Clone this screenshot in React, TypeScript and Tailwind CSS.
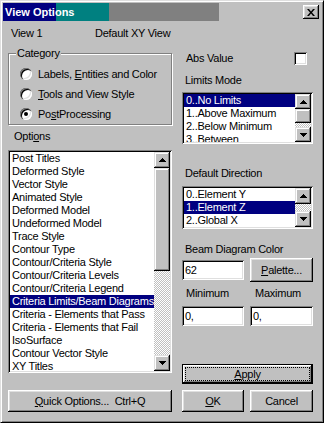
import React from 'react';

const raised =
  'shadow-[inset_-1px_-1px_#000,inset_1px_1px_#fff,inset_-2px_-2px_#808080,inset_2px_2px_#dfdfdf]';
const sunken =
  'shadow-[inset_1px_1px_#808080,inset_-1px_-1px_#fff,inset_2px_2px_#000,inset_-2px_-2px_#dfdfdf]';
const sbBtn =
  'shadow-[inset_-1px_-1px_#000,inset_1px_1px_#dfdfdf,inset_-2px_-2px_#808080,inset_2px_2px_#fff]';
const checker = 'bg-[repeating-conic-gradient(#fff_0_25%,#c0c0c0_0_50%)] bg-[length:2px_2px]';

function Arrow({ down }: { down?: boolean }) {
  return (
    <svg width="7" height="4" viewBox="0 0 7 4" className={down ? 'rotate-180' : ''}>
      <path d="M3 0h1v1h1v1h1v1h1v1H0V3h1V2h1V1h1z" fill="#000" />
    </svg>
  );
}

function ScrollBar({ arrow, thumb }: { arrow: string; thumb?: string }) {
  return (
    <div className="flex w-[16px] shrink-0 flex-col">
      <div className={`flex ${arrow} items-center justify-center bg-[#c0c0c0] ${sbBtn}`}>
        <Arrow />
      </div>
      {thumb && <div className={`${thumb} bg-[#c0c0c0] ${sbBtn}`} />}
      <div className={`flex-1 ${checker}`} />
      <div className={`flex ${arrow} items-center justify-center bg-[#c0c0c0] ${sbBtn}`}>
        <Arrow down />
      </div>
    </div>
  );
}

function ListBox({
  items,
  selected,
  className,
  arrow,
  thumb,
}: {
  items: string[];
  selected: number;
  className: string;
  arrow: string;
  thumb?: string;
}) {
  return (
    <div className={`flex bg-white p-[2px] ${sunken} ${className}`}>
      <div className="min-w-0 flex-1 overflow-hidden">
        {items.map((t, i) => (
          <div
            key={t}
            className={`h-[13px] whitespace-nowrap pl-[2px] leading-[13px] ${
              i === selected ? 'bg-[#000080] text-white' : ''
            }`}
          >
            {t}
          </div>
        ))}
      </div>
      <ScrollBar arrow={arrow} thumb={thumb} />
    </div>
  );
}

function Radio({ checked, children }: { checked?: boolean; children: React.ReactNode }) {
  return (
    <div className="flex h-[20px] items-center gap-[6px]">
      <div className="flex h-[12px] w-[12px] items-center justify-center rounded-full bg-white shadow-[inset_1px_1px_#808080,inset_2px_2px_#000,inset_-1px_-1px_#fff,inset_-2px_-2px_#dfdfdf]">
        {checked && <div className="h-[4px] w-[4px] rounded-full bg-black" />}
      </div>
      <span>{children}</span>
    </div>
  );
}

function Field({ value, className }: { value: string; className: string }) {
  return (
    <div className={`flex items-center bg-white pl-[3px] leading-[13px] ${sunken} ${className}`}>
      {value}
    </div>
  );
}

const options = [
  'Post Titles',
  'Deformed Style',
  'Vector Style',
  'Animated Style',
  'Deformed Model',
  'Undeformed Model',
  'Trace Style',
  'Contour Type',
  'Contour/Criteria Style',
  'Contour/Criteria Levels',
  'Contour/Criteria Legend',
  'Criteria Limits/Beam Diagrams',
  'Criteria - Elements that Pass',
  'Criteria - Elements that Fail',
  'IsoSurface',
  'Contour Vector Style',
  'XY Titles',
];

export default function App() {
  return (
    <div className="h-[423px] w-[324px] border border-t-[#dfdfdf] border-l-[#dfdfdf] border-r-black border-b-black bg-[#c0c0c0] font-['Liberation_Sans',Arial,sans-serif] text-[11px] leading-[13px] tracking-[-0.25px] text-black">
      <div className="flex h-full flex-col p-px shadow-[inset_1px_1px_#fff,inset_-1px_-1px_#808080]">
        <div className="m-px flex h-[18px] items-center justify-between bg-[linear-gradient(to_right,#000080_53px,#008080_53px,#008080_106px,#808080_106px,#808080_216px,transparent_216px)] pl-[2px] pr-[2px]">
          <span className="text-[11px] font-bold tracking-normal text-white">View Options</span>
          <div className={`flex h-[14px] w-[16px] items-center justify-center bg-[#c0c0c0] ${raised}`}>
            <svg width="8" height="7" viewBox="0 0 8 7">
              <path d="M0 0h2l2 2.4L6 0h2L5 3.5 8 7H6L4 4.6 2 7H0l3-3.5z" fill="#000" />
            </svg>
          </div>
        </div>

        <div className="flex flex-col pl-[6px] pr-[7px]">
          <div className="mt-[5px] flex h-[13px] pl-[3px]">
            <span className="w-[84px]">View 1</span>
            <span>Default XY View</span>
          </div>

          <div className="flex gap-[10px]">
            {/* left column */}
            <div className="flex w-[164px] flex-col">
              <fieldset className="mt-[7px] border border-[#808080] shadow-[inset_1px_1px_#fff,1px_1px_#fff]">
                <legend className="ml-[7px] bg-[#c0c0c0] px-px leading-[13px]">Category</legend>
                <div className="pl-[11px] pt-[4px]">
                  <Radio>
                    Labels, <u>E</u>ntities and Color
                  </Radio>
                  <Radio>
                    <u>T</u>ools and View Style
                  </Radio>
                  <Radio checked>
                    Po<u>s</u>tProcessing
                  </Radio>
                </div>
              </fieldset>
              <div className="mt-[5px] h-[13px] pl-[6px]">
                Opti<u>o</u>ns
              </div>
              <ListBox
                items={options}
                selected={11}
                className="mt-[7px] h-[223px]"
                arrow="h-[16px]"
                thumb="h-[103px]"
              />
              <div className={`mt-[17px] flex h-[22px] items-center justify-center bg-[#c0c0c0] ${raised}`}>
                <span>
                  <u>Q</u>uick Options...&nbsp;&nbsp;Ctrl+Q
                </span>
              </div>
            </div>

            {/* right column */}
            <div className="flex w-[131px] flex-col">
              <div className="mt-[12px] flex h-[13px] items-center justify-between pl-[4px] pr-[6px]">
                <span>Abs Value</span>
                <div className={`h-[13px] w-[13px] bg-white ${sunken}`} />
              </div>
              <div className="mt-[9px] h-[13px] pl-[3px]">Limits Mode</div>
              <ListBox
                items={['0..No Limits', '1..Above Maximum', '2..Below Minimum', '3..Between']}
                selected={0}
                className="mt-[5px] h-[52px]"
                arrow="h-[15px]"
                thumb="h-[14px]"
              />
              <div className="mt-[23px] h-[13px] pl-[3px]">Default Direction</div>
              <ListBox
                items={['0..Element Y', '1..Element Z', '2..Global X']}
                selected={1}
                className="mt-[6px] h-[43px]"
                arrow="h-[16px]"
              />
              <div className="mt-[14px] h-[13px] pl-[3px]">Beam Diagram Color</div>
              <div className="mt-[2px] flex h-[24px] items-center gap-[6px]">
                <Field value="62" className="h-[20px] w-[62px]" />
                <div className={`flex h-[24px] flex-1 items-center justify-center bg-[#c0c0c0] ${raised}`}>
                  <span>
                    <u>P</u>alette...
                  </span>
                </div>
              </div>
              <div className="mt-[5px] flex h-[13px] gap-[6px]">
                <span className="w-[62px] pl-[4px]">Minimum</span>
                <span className="pl-[5px]">Maximum</span>
              </div>
              <div className="mt-[6px] flex gap-[6px]">
                <Field value="0," className="h-[20px] w-[62px]" />
                <Field value="0," className="h-[20px] flex-1" />
              </div>
              <div className="mt-[38px] h-[20px] border border-black bg-[#c0c0c0]">
                <div className={`flex h-full p-[2px] ${raised}`}>
                  <div className="flex flex-1 items-center justify-center border border-dotted border-black">
                    <span>
                      <u>A</u>pply
                    </span>
                  </div>
                </div>
              </div>
              <div className="mt-[6px] flex h-[22px] gap-[6px]">
                <div className={`flex w-[62px] items-center justify-center bg-[#c0c0c0] ${raised}`}>
                  <span>
                    <u>O</u>K
                  </span>
                </div>
                <div className={`flex flex-1 items-center justify-center bg-[#c0c0c0] ${raised}`}>
                  Cancel
                </div>
              </div>
            </div>
          </div>
        </div>
      </div>
    </div>
  );
}
